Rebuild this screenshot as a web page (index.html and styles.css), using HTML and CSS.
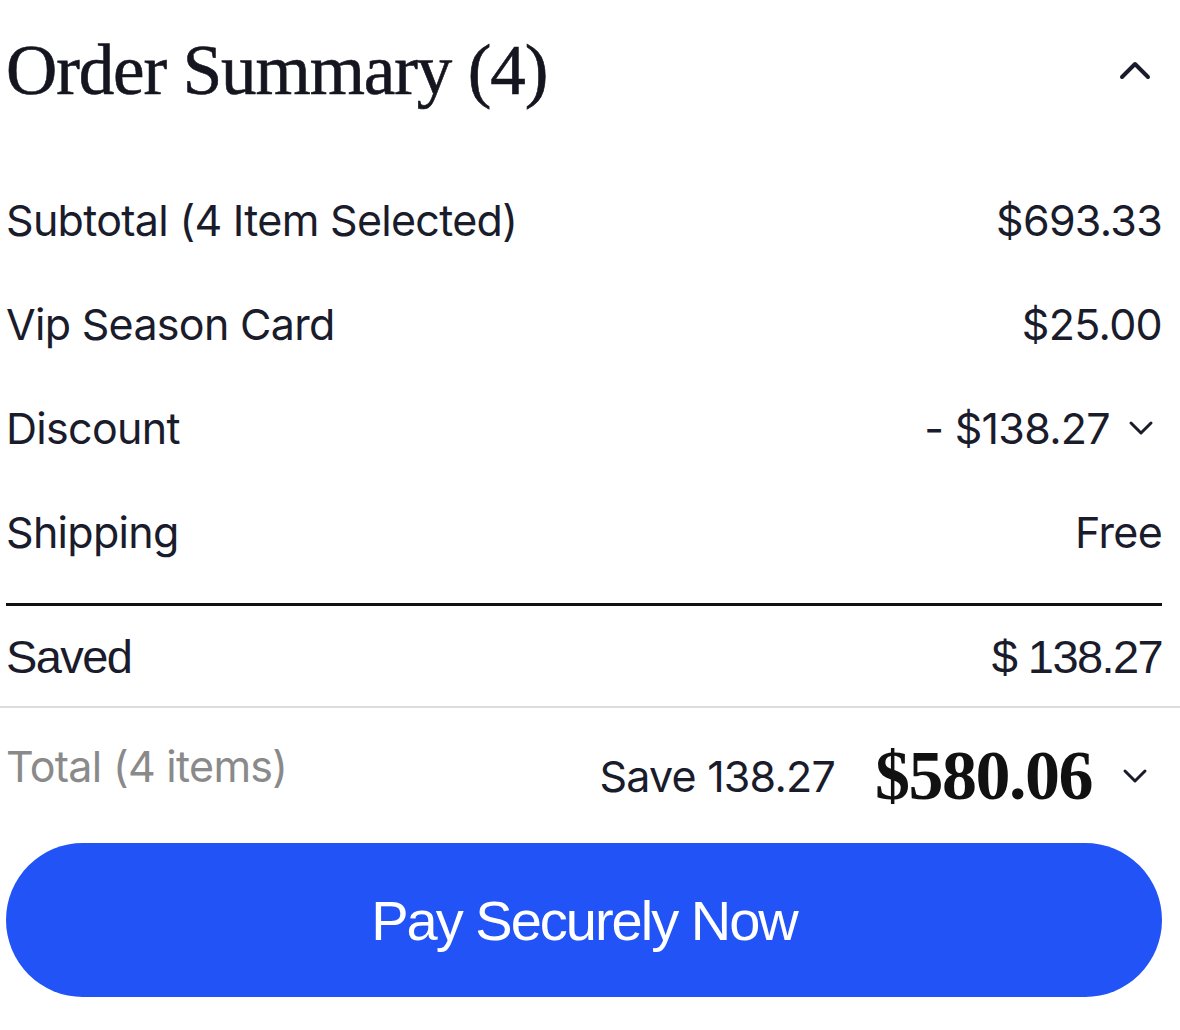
FILE: index.html
```html
<!DOCTYPE html>
<html>
<head>
<meta charset="utf-8">
<link rel="stylesheet" href="styles.css">
</head>
<body>
<div class="summary">
  <div class="header">
    <h1 class="title">Order Summary (4)</h1>
    <svg class="chev-up" width="34" height="22" viewBox="0 0 34 22"><path d="M4 18 L17 5 L30 18" fill="none" stroke="#1a1c2c" stroke-width="4" stroke-linecap="round" stroke-linejoin="round"/></svg>
  </div>
  <div class="rows">
    <div class="row"><span>Subtotal (4 Item Selected)</span><span>$693.33</span></div>
    <div class="row"><span>Vip Season Card</span><span>$25.00</span></div>
    <div class="row"><span>Discount</span><span class="with-chev">- $138.27 <svg class="chev-down" width="26" height="16" viewBox="0 0 26 16"><path d="M3 3 L13 13 L23 3" fill="none" stroke="#1a1c2c" stroke-width="3" stroke-linecap="round" stroke-linejoin="round"/></svg></span></div>
    <div class="row"><span>Shipping</span><span>Free</span></div>
  </div>
  <div class="saved-row"><span>Saved</span><span>$ 138.27</span></div>
</div>
<div class="divider"></div>
<div class="footer">
  <div class="total-row">
    <span class="total-label">Total (4 items)</span>
    <span class="total-right"><span class="save">Save 138.27</span><span class="amount">$580.06</span><svg class="chev-down" width="26" height="16" viewBox="0 0 26 16"><path d="M3 3 L13 13 L23 3" fill="none" stroke="#1a1c2c" stroke-width="3" stroke-linecap="round" stroke-linejoin="round"/></svg></span>
  </div>
  <button class="pay">Pay Securely Now</button>
</div>
</body>
</html>
```

FILE: styles.css
```css
html, body { margin: 0; padding: 0; background: #fff; }
body { font-family: "Inter", "Liberation Sans", sans-serif; color: #1a1c2c; }
.summary { padding: 0 18px 0 6px; }
.header { display: flex; justify-content: space-between; align-items: center; height: 140px; padding-right: 10px; }
.title { margin: 0; font-family: "Liberation Serif", serif; font-weight: 400; font-size: 71px; letter-spacing: -1.1px; color: #14151f; -webkit-text-stroke: 0.6px #14151f; }
.rows { margin-top: 28px; margin-bottom: 19px; }
.row { display: flex; justify-content: space-between; align-items: center; height: 104px; font-size: 43px; letter-spacing: -0.7px; }
.with-chev { display: flex; align-items: center; gap: 10px; }
.chev-down { margin-left: 8px; margin-right: 8px; }
.saved-row { display: flex; justify-content: space-between; align-items: center; height: 100px; border-top: 3px solid #111; font-family: "Liberation Sans", sans-serif; font-size: 47px; letter-spacing: -1.6px; }
.divider { height: 2px; background: #dcdcdc; }
.footer { padding: 0 18px 0 6px; }
.total-row { display: flex; justify-content: space-between; align-items: center; height: 135px; }
.total-label { font-size: 43px; color: #8a8a8a; letter-spacing: -0.7px; margin-top: -20px; }
.total-right { display: flex; align-items: center; }
.save { font-size: 43px; letter-spacing: -0.8px; margin-right: 40px; }
.amount { font-family: "Liberation Serif", serif; font-weight: 700; font-size: 70px; letter-spacing: -1.5px; color: #111; }
.total-right .chev-down { margin-left: 30px; margin-right: 14px; }
.pay { display: block; width: 100%; height: 154px; border: none; border-radius: 77px; background: #2153f6; color: #fff; font-family: "Liberation Sans", sans-serif; font-size: 56px; letter-spacing: -2px; }
```
